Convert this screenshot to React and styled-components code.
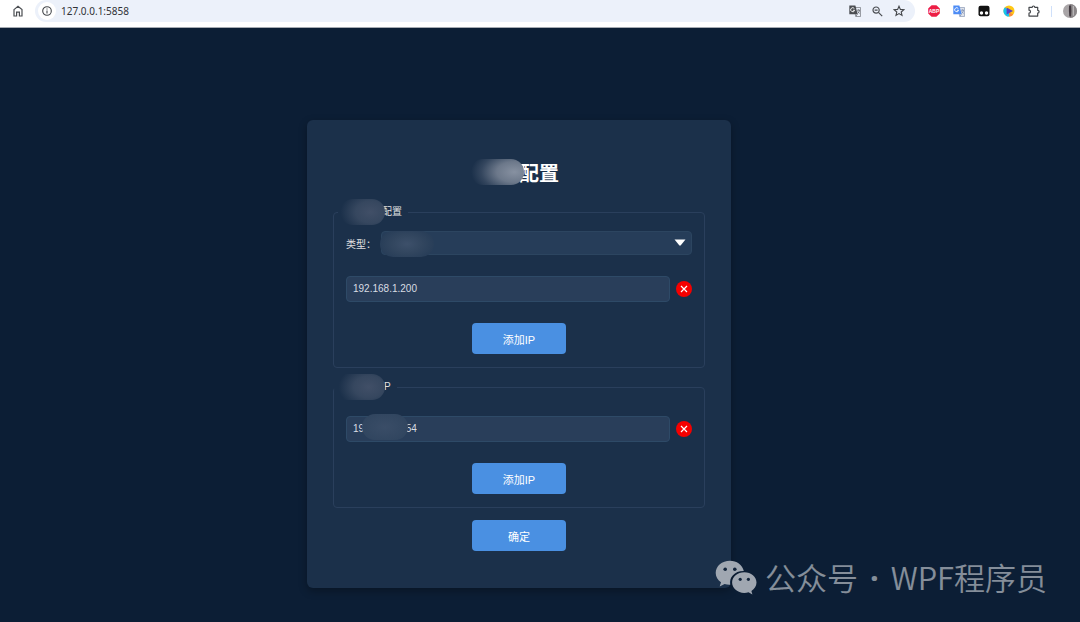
import { useState } from "react";
import styled, { createGlobalStyle } from "styled-components";

const GlobalStyle = createGlobalStyle`
  * {
    box-sizing: border-box;
  }

  body {
    margin: 0;
    background-color: #0c1e35;
    color: #e0e0e0;
    font-family: "Liberation Sans", "Noto Sans CJK SC", sans-serif;
    font-size: 10px;
  }

  button, input, select {
    font-family: inherit;
  }
`;

const Page = styled.div`
  position: relative;
  min-height: 100vh;
  overflow: hidden;
`;

const Toolbar = styled.header`
  background-color: white;
  border-bottom: 1px solid #a6abb2;
  height: 28px;

  display: flex;
  align-items: flex-start;
`;

const IconButton = styled.button`
  background-color: transparent;
  border: none;
  padding: 0;
  width: ${(props) => props.$width || 22}px;
  height: 22px;

  display: flex;
  align-items: center;
  justify-content: center;
  flex-shrink: 0;
`;

const AddressBar = styled.div`
  background-color: #ecf1fa;
  border-radius: 11px;
  height: 22px;
  padding: 0 5px 0 3px;

  display: flex;
  align-items: center;
  flex: 1;
`;

const SiteInfo = styled(IconButton)`
  background-color: white;
  border-radius: 9px;
  width: 18px;
  height: 18px;
`;

const Address = styled.input`
  background-color: transparent;
  border: none;
  outline: none;
  color: #303236;
  font-family: "Noto Sans", sans-serif;
  font-size: 10px;
  padding: 0 5px;
  min-width: 0;
  flex: 1;
`;

const Extensions = styled.div`
  height: 22px;
  padding-left: 6px;

  display: flex;
  align-items: center;
`;

const Separator = styled.span`
  background-color: #cfe0fa;
  width: 1px;
  height: 11px;
  margin: 0 8px 0 5px;
`;

const Main = styled.main`
  padding: 92px 42px 34px 0;

  display: flex;
  justify-content: center;
`;

const Card = styled.form`
  background-color: #1b304a;
  border-radius: 6px;
  box-shadow: 0 3px 8px rgba(0, 0, 0, 0.3);
  width: 100%;
  max-width: 424px;
  padding: 39px 26px 37px;

  display: flex;
  flex-direction: column;
  align-items: center;
`;

const Title = styled.h1`
  color: white;
  font-size: 20px;
  line-height: 30px;
  margin: 0 0 16px;
`;

const Fieldset = styled.fieldset`
  border: 1px solid #2a3f5c;
  border-radius: 4px;
  width: 100%;
  min-width: 0;
  margin: 0 0 12px;
  padding: 0;
`;

const Legend = styled.legend`
  line-height: 14px;
  margin-left: 4px;
  padding: 0 6px;
`;

const FieldBody = styled.div`
  padding: ${(props) => props.$top}px 12px 13px;

  display: flex;
  flex-direction: column;
  align-items: center;
  gap: 21px;
`;

const Row = styled.div`
  width: 100%;

  display: flex;
  align-items: center;
  gap: ${(props) => props.$gap}px;
`;

const Control = styled.div`
  position: relative;
  flex: 1;
  min-width: 0;

  display: flex;
`;

const Select = styled.select`
  appearance: none;
  background-color: #263d59;
  border: 1px solid #2c4560;
  border-radius: 4px;
  color: #e0e0e0;
  font-size: 10px;
  width: 100%;
  height: 24px;
  padding: 0 24px 0 6px;
`;

const Arrow = styled.svg`
  position: absolute;
  right: 6px;
  top: 8px;
  pointer-events: none;
`;

const Input = styled.input`
  background-color: #293e5a;
  border: 1px solid #2e4a67;
  border-radius: 4px;
  color: #d8dce2;
  font-size: 10px;
  width: 100%;
  height: 26px;
  padding: 0 6px 2px;
`;

const RemoveButton = styled.button`
  background-color: #f50000;
  border: none;
  border-radius: 50%;
  width: 16px;
  height: 16px;
  padding: 0;

  display: flex;
  align-items: center;
  justify-content: center;
  flex-shrink: 0;
`;

const Button = styled.button`
  background-color: #4a90e2;
  border: none;
  border-radius: 4px;
  color: white;
  font-size: 11px;
  width: 94px;
  height: 31px;
  padding: 0;
`;

// keeps the room of the hidden characters
const Hidden = styled.span`
  position: relative;
  display: inline-block;
  width: ${(props) => props.$width}px;
  height: 1em;
  vertical-align: middle;
`;

const Smudge = styled.span`
  position: absolute;
  top: ${(props) => props.$top}px;
  left: ${(props) => props.$left}px;
  width: ${(props) => props.$width}px;
  height: 26px;
  border-radius: 13px;
  background: ${(props) => props.$fill};
  pointer-events: none;
`;

const Watermark = styled.div`
  position: absolute;
  right: 33px;
  bottom: 24px;
  color: rgba(255, 255, 255, 0.5);
  font-family: "Noto Sans CJK SC", sans-serif;
  font-size: 31px;
  font-weight: 350;
  line-height: 42px;

  display: flex;
  align-items: center;
  gap: 8px;
`;

const Dot = styled.span`
  font-family: "Noto Sans", sans-serif;
  font-weight: 700;
  margin: 0 4px;
`;

const titleFill =
  "radial-gradient(ellipse 44px 26px at 82% 50%, #8791a1 0%, #6c788a 40%, #34465e 75%, #1b304a 98%)";
const legendFill =
  "radial-gradient(ellipse 30px 22px at 68% 50%, #414f67 0%, #36475f 50%, #1b304a 100%)";
const selectFill =
  "radial-gradient(ellipse 30px 18px at 50% 50%, #3d506a 0%, #32465f 50%, #263c57 100%)";
const inputFill =
  "radial-gradient(ellipse 26px 16px at 50% 50%, #3a4d67 0%, #30455f 100%)";

const HomeIcon = () => (
  <svg width="10" height="12" viewBox="0 0 10 12" fill="none" stroke="#4a4d51" strokeWidth="1.2">
    <path d="M1 4.6 5 1.3l4 3.3V11H6.4V7.2H3.6V11H1z" />
  </svg>
);

const InfoIcon = () => (
  <svg width="10" height="10" viewBox="0 0 10 10" fill="none" stroke="#44474b">
    <circle cx="5" cy="5" r="4.3" strokeWidth="1.1" />
    <path d="M5 4.5v3M5 2.4v1.1" strokeWidth="1.1" />
  </svg>
);

const TranslateIcon = ({ front, back, ink }) => (
  <svg width="12" height="12" viewBox="0 0 12 12" fill="none">
    <path d="M5 2.5h6.5v9H6.8z" fill={back} stroke={ink} strokeWidth=".6" />
    <path d="M.3.5h6.1l2.3 8.7H.3z" fill={front} />
    <path d="M5.4 3.7a2 2 0 1 0 .2 1.6H3.9" stroke="white" strokeWidth=".9" />
    <path d="M8 5.2h3M9.5 4.4v.8M10.6 5.2c-.3 1.6-1.1 2.6-2 3.2M8.7 6.3c.5 1.1 1 1.6 1.9 2.1M6.8 11.3l1.5-2.1" stroke={ink} strokeWidth=".8" />
  </svg>
);

const ZoomOutIcon = () => (
  <svg width="11" height="11" viewBox="0 0 11 11" fill="none" stroke="#4a4d51" strokeWidth="1.2">
    <circle cx="4.1" cy="4.1" r="3.1" />
    <path d="m6.4 6.4 3.8 3.8M2.6 4.1h3" />
  </svg>
);

const StarIcon = () => (
  <svg width="12" height="12" viewBox="0 0 12 12" fill="none" stroke="#44474b" strokeWidth="1.1">
    <path d="m6 1.2 1.4 3.2 3.5.3-2.7 2.3.8 3.4-3-1.8-3 1.8.8-3.4L1.1 4.7l3.5-.3z" />
  </svg>
);

const AdblockIcon = () => (
  <svg width="12" height="12" viewBox="0 0 12 12">
    <path d="M3.6.2h4.8l3.4 3.4v4.8l-3.4 3.4H3.6L.2 8.4V3.6z" fill="#ed1e45" />
    <text x="6" y="7.9" fill="white" fontFamily="Liberation Sans, sans-serif" fontSize="5" fontWeight="700" textAnchor="middle">
      ABP
    </text>
  </svg>
);

const MonkeyIcon = () => (
  <svg width="12" height="12" viewBox="0 0 12 12">
    <rect x=".5" y=".8" width="11" height="10.4" rx="2" fill="#111" />
    <circle cx="3.5" cy="8" r="1.7" fill="white" />
    <circle cx="8.5" cy="8" r="1.7" fill="white" />
  </svg>
);

const PlayIcon = () => (
  <svg width="12" height="12" viewBox="0 0 12 12">
    <circle cx="6" cy="6" r="5.5" fill="#ffc815" />
    <path d="M6 6 2 2.2A5.5 5.5 0 0 0 6.6 11.5z" fill="#16c5ee" />
    <path d="M6.2 11.5a5.5 5.5 0 0 0 4-2L6 7z" fill="#fb8a3c" />
    <path d="M3.6 2.6 10 6l-6.4 3.5z" fill="#5b3fc4" />
  </svg>
);

const PuzzleIcon = () => (
  <svg width="12" height="12" viewBox="0 0 12 12" fill="none" stroke="#44474b" strokeWidth="1.2" strokeLinejoin="round">
    <path d="M1 2.3h3.2a1.3 1.3 0 0 1 2.6 0h2.9v3a1.4 1.4 0 0 1 0 2.8v3H1V8.2a1.5 1.5 0 0 0 0-3z" />
  </svg>
);

const Avatar = () => (
  <svg width="14" height="14" viewBox="0 0 14 14">
    <circle cx="7" cy="7" r="7" fill="#a9a5a7" />
    <path d="M7 0a7 7 0 0 1 0 14z" fill="#8a8688" />
    <path d="M6 1.5h2l.4 5.5-.4 5.5H6.3L5.9 7z" fill="#443c42" />
    <path d="M10.3 2v9.7" stroke="#c4c1c3" />
  </svg>
);

const CrossIcon = () => (
  <svg width="8" height="8" viewBox="0 0 8 8" stroke="white" strokeWidth="1.2">
    <path d="m1 1 6 6M7 1 1 7" />
  </svg>
);

const WechatIcon = () => (
  <svg width="42" height="35" viewBox="0 0 42 35">
    <path
      fill="#a0a7b1"
      d="M15 .7C7 .7.7 6.1.7 12.9c0 3.9 2.1 7.2 5.3 9.4l-1.3 4.2 4.9-2.5c1.8.5 3.5.8 5.6.7-1.6-7.4 4.9-14 13.6-13.7C27.3 4.8 21.6.7 15 .7z"
    />
    <path
      fill="#a0a7b1"
      d="M29.3 12.2c-6.8 0-12.2 4.6-12.2 10.3s5.4 10.4 12.2 10.4c1.5 0 2.9-.2 4.2-.6l3.9 2.1-1-3.5c3.1-1.9 5.1-4.9 5.1-8.4 0-5.7-5.4-10.3-12.2-10.3z"
    />
    <g fill="#12243b">
      <circle cx="10.2" cy="9.3" r="1.8" />
      <circle cx="19.8" cy="9.3" r="1.8" />
      <circle cx="25.2" cy="19.3" r="1.6" />
      <circle cx="33.4" cy="19.3" r="1.6" />
    </g>
  </svg>
);

const BrowserBar = () => (
  <Toolbar>
    <IconButton type="button" aria-label="Home" $width={35}>
      <HomeIcon />
    </IconButton>
    <AddressBar>
      <SiteInfo type="button" aria-label="Site information" $width={18}>
        <InfoIcon />
      </SiteInfo>
      <Address aria-label="Address" defaultValue="127.0.0.1:5858" />
      <IconButton type="button" aria-label="Translate">
        <TranslateIcon front="#4a4d51" back="#ecf1fa" ink="#5f6368" />
      </IconButton>
      <IconButton type="button" aria-label="Zoom">
        <ZoomOutIcon />
      </IconButton>
      <IconButton type="button" aria-label="Bookmark">
        <StarIcon />
      </IconButton>
    </AddressBar>
    <Extensions>
      <IconButton type="button" aria-label="Adblock" $width={25}>
        <AdblockIcon />
      </IconButton>
      <IconButton type="button" aria-label="Translator" $width={25}>
        <TranslateIcon front="#4c8bf5" back="#dfe3ea" ink="#7a8bab" />
      </IconButton>
      <IconButton type="button" aria-label="Scripts" $width={25}>
        <MonkeyIcon />
      </IconButton>
      <IconButton type="button" aria-label="Player" $width={25}>
        <PlayIcon />
      </IconButton>
      <IconButton type="button" aria-label="Extensions" $width={25}>
        <PuzzleIcon />
      </IconButton>
      <Separator />
      <IconButton type="button" aria-label="Profile" $width={20}>
        <Avatar />
      </IconButton>
    </Extensions>
  </Toolbar>
);

const IpRow = ({ value, label, onChange, onRemove, children }) => (
  <Row $gap={6}>
    <Control>
      <Input
        aria-label={label}
        value={value}
        onChange={(e) => onChange(e.target.value)}
      />
      {children}
    </Control>
    <RemoveButton type="button" aria-label="删除" onClick={onRemove}>
      <CrossIcon />
    </RemoveButton>
  </Row>
);

const App = () => {
  const [first, setFirst] = useState(["192.168.1.200"]);
  const [second, setSecond] = useState(["19               54"]);

  const changeItem = (setList, index, value) => {
    setList((list) => list.map((el, i) => (i === index ? value : el)));
  };

  const removeItem = (setList, index) => {
    setList((list) => list.filter((_, i) => i !== index));
  };

  return (
    <Page>
      <GlobalStyle />
      <BrowserBar />
      <Main>
        <Card onSubmit={(e) => e.preventDefault()}>
          <Title>
            <Hidden $width={40}>
              <Smudge $top={-7} $left={-9} $width={54} $fill={titleFill} />
            </Hidden>
            配置
          </Title>

          <Fieldset>
            <Legend>
              <Hidden $width={38}>
                <Smudge $top={-8} $left={-4} $width={45} $fill={legendFill} />
              </Hidden>
              配置
            </Legend>
            <FieldBody $top={12}>
              <Row $gap={5}>
                <label htmlFor="type">类型：</label>
                <Control>
                  <Select id="type" defaultValue="">
                    <option value=""></option>
                  </Select>
                  <Smudge $top={0} $left={-1} $width={54} $fill={selectFill} />
                  <Arrow width="12" height="7" viewBox="0 0 12 7">
                    <path d="M.5.5h11L6.8 6.3q-.8.7-1.6 0z" fill="white" />
                  </Arrow>
                </Control>
              </Row>
              {first.map((ip, i) => (
                <IpRow
                  key={i}
                  label="IP"
                  value={ip}
                  onChange={(value) => changeItem(setFirst, i, value)}
                  onRemove={() => removeItem(setFirst, i)}
                />
              ))}
              <Button type="button" onClick={() => setFirst([...first, ""])}>
                添加IP
              </Button>
            </FieldBody>
          </Fieldset>

          <Fieldset>
            <Legend>
              <Hidden $width={40}>
                <Smudge $top={-8} $left={-10} $width={51} $fill={legendFill} />
              </Hidden>
              P
            </Legend>
            <FieldBody $top={22}>
              {second.map((ip, i) => (
                <IpRow
                  key={i}
                  label="IP"
                  value={ip}
                  onChange={(value) => changeItem(setSecond, i, value)}
                  onRemove={() => removeItem(setSecond, i)}
                >
                  {i === 0 && (
                    <Smudge $top={-2} $left={16} $width={46} $fill={inputFill} />
                  )}
                </IpRow>
              ))}
              <Button type="button" onClick={() => setSecond([...second, ""])}>
                添加IP
              </Button>
            </FieldBody>
          </Fieldset>

          <Button type="submit">确定</Button>
        </Card>
      </Main>
      <Watermark>
        <WechatIcon />
        <span>公众号</span>
        <Dot>·</Dot>
        <span>WPF程序员</span>
      </Watermark>
    </Page>
  );
};

export default App;
